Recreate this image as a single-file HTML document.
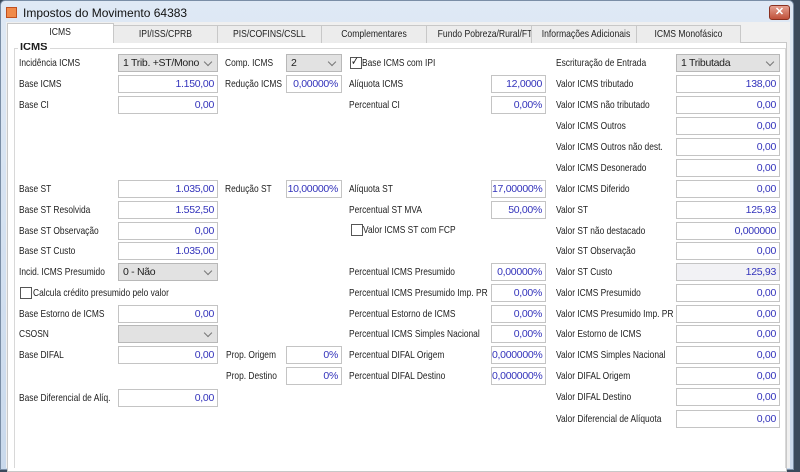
<!DOCTYPE html>
<html><head><meta charset="utf-8"><style>
*{box-sizing:border-box;margin:0;padding:0}
body{width:800px;height:458px;overflow:hidden;background:#3a4a5c;font-family:"Liberation Sans",sans-serif;font-size:10.5px;color:#1e1e1e;position:relative}
.win{position:absolute;left:0;top:0;width:794px;height:470px;background:linear-gradient(#dfe9f5,#c9d9ec);border:1px solid #7a8ea6;border-radius:5px 5px 0 0}
.title{position:absolute;left:22px;top:5px;font-size:12px;color:#111}
.ico{position:absolute;left:5px;top:6px;width:11px;height:11px;background:#f08a4a;border:1px solid #c05020}
.close{position:absolute;left:768px;top:4px;width:21px;height:15px;border-radius:3px;background:linear-gradient(#e5a090,#c0503a);border:1px solid #8a3020;color:#fff;font-size:11px;text-align:center;line-height:13px;font-weight:bold}
.body{position:absolute;left:6px;top:22px;width:784px;height:446px;background:#f0f0f0}
.tab{position:absolute;top:25px;height:18px;background:#ececec;border:1px solid #c8c8c8;border-bottom:none;text-align:center;line-height:16px;white-space:nowrap;overflow:hidden}
.tab span{display:inline-block;transform:scaleX(0.82)}
.tab.a{top:23px;height:20px;background:#fff;z-index:2}
.panel{position:absolute;left:7px;top:42px;width:780px;height:430px;background:#fff;border:1px solid #c8c8c8}
.grp{position:absolute;left:14px;top:48px;width:772px;height:420px;border:1px solid #d8d8d8;border-bottom:none}
.gt{position:absolute;left:18px;top:41px;background:#fff;padding:0 2px;font-weight:bold;font-size:11px}
.l{position:absolute;white-space:nowrap;line-height:14px;transform:scaleX(0.8);transform-origin:0 0}
.i{position:absolute;height:18px;border:1px solid #c4c4c4;background:#fff;color:#3333bb;text-align:right;padding-right:3px;line-height:16px;letter-spacing:-0.3px}
.g{background:#f2f2f5}
.s{position:absolute;height:18px;border:1px solid #b8b8b8;background:#e2e2e2;line-height:16px;padding-left:4px;letter-spacing:-0.3px}
.s:after{content:"";position:absolute;right:6px;top:4px;width:5px;height:5px;border-right:1px solid #777;border-bottom:1px solid #777;transform:rotate(45deg)}
.cb{position:absolute;width:12px;height:12px;border:1px solid #555;background:#fff}
</style></head><body>
<div class="win"><div class="ico"></div><div class="title">Impostos do Movimento 64383</div><div class="close">✕</div></div>
<div class="body"></div>
<div class="panel"></div>
<div class="tab a" style="left:7px;width:107px"><span>ICMS</span></div>
<div class="tab" style="left:113px;width:105px"><span>IPI/ISS/CPRB</span></div>
<div class="tab" style="left:217px;width:105px"><span>PIS/COFINS/CSLL</span></div>
<div class="tab" style="left:321px;width:106px"><span>Complementares</span></div>
<div class="tab" style="left:426px;width:106px"><span>Fundo Pobreza/Rural/FTI</span></div>
<div class="tab" style="left:531px;width:106px"><span>Informações Adicionais</span></div>
<div class="tab" style="left:636px;width:105px"><span>ICMS Monofásico</span></div>
<div class="grp"></div><div class="gt">ICMS</div>

<div class="l" style="left:19px;top:56px">Incidência ICMS</div><div class="s" style="left:118px;top:54px;width:100px">1 Trib. +ST/Mono</div>
<div class="l" style="left:19px;top:77px">Base ICMS</div><div class="i" style="left:118px;top:75px;width:100px">1.150,00</div>
<div class="l" style="left:19px;top:98px">Base CI</div><div class="i" style="left:118px;top:96px;width:100px">0,00</div>
<div class="l" style="left:19px;top:182px">Base ST</div><div class="i" style="left:118px;top:180px;width:100px">1.035,00</div>
<div class="l" style="left:19px;top:203px">Base ST Resolvida</div><div class="i" style="left:118px;top:201px;width:100px">1.552,50</div>
<div class="l" style="left:19px;top:224px">Base ST Observação</div><div class="i" style="left:118px;top:222px;width:100px">0,00</div>
<div class="l" style="left:19px;top:244px">Base ST Custo</div><div class="i" style="left:118px;top:242px;width:100px">1.035,00</div>
<div class="l" style="left:19px;top:265px">Incid. ICMS Presumido</div><div class="s" style="left:118px;top:263px;width:100px">0 - Não</div>
<div class="cb" style="left:20px;top:287px"></div><div class="l" style="left:33px;top:286px">Calcula crédito presumido pelo valor</div>
<div class="l" style="left:19px;top:307px">Base Estorno de ICMS</div><div class="i" style="left:118px;top:305px;width:100px">0,00</div>
<div class="l" style="left:19px;top:327px">CSOSN</div><div class="s" style="left:118px;top:325px;width:100px"></div>
<div class="l" style="left:19px;top:348px">Base DIFAL</div><div class="i" style="left:118px;top:346px;width:100px">0,00</div>
<div class="l" style="left:19px;top:391px">Base Diferencial de Alíq.</div><div class="i" style="left:118px;top:389px;width:100px">0,00</div>

<div class="l" style="left:225px;top:56px">Comp. ICMS</div><div class="s" style="left:286px;top:54px;width:56px">2</div>
<div class="l" style="left:225px;top:77px">Redução ICMS</div><div class="i" style="left:286px;top:75px;width:56px">0,00000%</div>
<div class="l" style="left:225px;top:182px">Redução ST</div><div class="i" style="left:286px;top:180px;width:56px">10,00000%</div>
<div class="l" style="left:226px;top:348px">Prop. Origem</div><div class="i" style="left:286px;top:346px;width:56px">0%</div>
<div class="l" style="left:226px;top:369px">Prop. Destino</div><div class="i" style="left:286px;top:367px;width:56px">0%</div>

<div class="cb" style="left:350px;top:57px"></div><div class="l" style="left:351px;top:54px;font-size:12px">✓</div><div class="l" style="left:362px;top:56px">Base ICMS com IPI</div>
<div class="l" style="left:349px;top:77px">Alíquota ICMS</div><div class="i" style="left:491px;top:75px;width:55px">12,0000</div>
<div class="l" style="left:349px;top:98px">Percentual CI</div><div class="i" style="left:491px;top:96px;width:55px">0,00%</div>
<div class="l" style="left:349px;top:182px">Alíquota ST</div><div class="i" style="left:491px;top:180px;width:55px">17,00000%</div>
<div class="l" style="left:349px;top:203px">Percentual ST MVA</div><div class="i" style="left:491px;top:201px;width:55px">50,00%</div>
<div class="cb" style="left:351px;top:224px"></div><div class="l" style="left:363px;top:223px">Valor ICMS ST com FCP</div>
<div class="l" style="left:349px;top:265px">Percentual ICMS Presumido</div><div class="i" style="left:491px;top:263px;width:55px">0,00000%</div>
<div class="l" style="left:349px;top:286px">Percentual ICMS Presumido Imp. PR</div><div class="i" style="left:491px;top:284px;width:55px">0,00%</div>
<div class="l" style="left:349px;top:307px">Percentual Estorno de ICMS</div><div class="i" style="left:491px;top:305px;width:55px">0,00%</div>
<div class="l" style="left:349px;top:327px">Percentual ICMS Simples Nacional</div><div class="i" style="left:491px;top:325px;width:55px">0,00%</div>
<div class="l" style="left:349px;top:348px">Percentual DIFAL Origem</div><div class="i" style="left:491px;top:346px;width:55px">0,000000%</div>
<div class="l" style="left:349px;top:369px">Percentual DIFAL Destino</div><div class="i" style="left:491px;top:367px;width:55px">0,000000%</div>

<div class="l" style="left:556px;top:56px">Escrituração de Entrada</div><div class="s" style="left:676px;top:54px;width:104px">1 Tributada</div>
<div class="l" style="left:556px;top:77px">Valor ICMS tributado</div><div class="i" style="left:676px;top:75px;width:104px">138,00</div>
<div class="l" style="left:556px;top:98px">Valor ICMS não tributado</div><div class="i" style="left:676px;top:96px;width:104px">0,00</div>
<div class="l" style="left:556px;top:119px">Valor ICMS Outros</div><div class="i" style="left:676px;top:117px;width:104px">0,00</div>
<div class="l" style="left:556px;top:140px">Valor ICMS Outros não dest.</div><div class="i" style="left:676px;top:138px;width:104px">0,00</div>
<div class="l" style="left:556px;top:161px">Valor ICMS Desonerado</div><div class="i" style="left:676px;top:159px;width:104px">0,00</div>
<div class="l" style="left:556px;top:182px">Valor ICMS Diferido</div><div class="i" style="left:676px;top:180px;width:104px">0,00</div>
<div class="l" style="left:556px;top:203px">Valor ST</div><div class="i" style="left:676px;top:201px;width:104px">125,93</div>
<div class="l" style="left:556px;top:224px">Valor ST não destacado</div><div class="i" style="left:676px;top:222px;width:104px">0,000000</div>
<div class="l" style="left:556px;top:244px">Valor ST Observação</div><div class="i" style="left:676px;top:242px;width:104px">0,00</div>
<div class="l" style="left:556px;top:265px">Valor ST Custo</div><div class="i g" style="left:676px;top:263px;width:104px">125,93</div>
<div class="l" style="left:556px;top:286px">Valor ICMS Presumido</div><div class="i" style="left:676px;top:284px;width:104px">0,00</div>
<div class="l" style="left:556px;top:307px">Valor ICMS Presumido Imp. PR</div><div class="i" style="left:676px;top:305px;width:104px">0,00</div>
<div class="l" style="left:556px;top:327px">Valor Estorno de ICMS</div><div class="i" style="left:676px;top:325px;width:104px">0,00</div>
<div class="l" style="left:556px;top:348px">Valor ICMS Simples Nacional</div><div class="i" style="left:676px;top:346px;width:104px">0,00</div>
<div class="l" style="left:556px;top:369px">Valor DIFAL Origem</div><div class="i" style="left:676px;top:367px;width:104px">0,00</div>
<div class="l" style="left:556px;top:390px">Valor DIFAL Destino</div><div class="i" style="left:676px;top:388px;width:104px">0,00</div>
<div class="l" style="left:556px;top:412px">Valor Diferencial de Alíquota</div><div class="i" style="left:676px;top:410px;width:104px">0,00</div>
</body></html>
